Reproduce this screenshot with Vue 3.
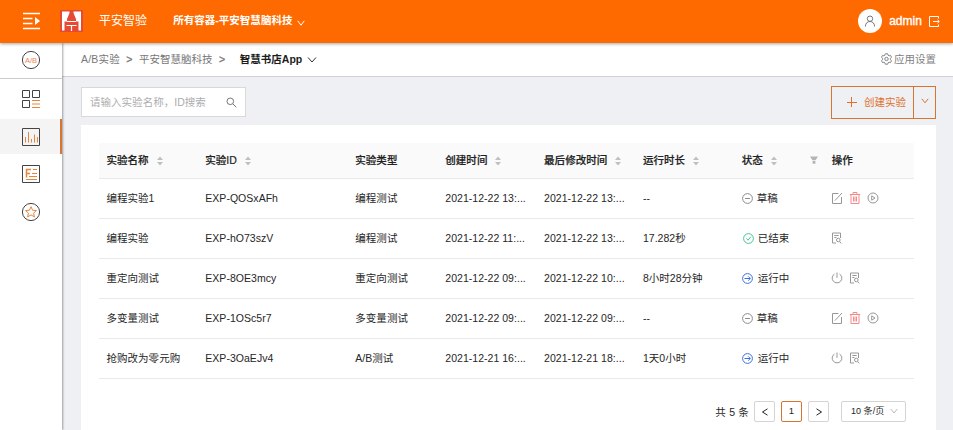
<script setup>
const columns = [
  { title: '实验名称', sort: true },
  { title: '实验ID', sort: true },
  { title: '实验类型' },
  { title: '创建时间', sort: true },
  { title: '最后修改时间', sort: true },
  { title: '运行时长', sort: true },
  { title: '状态', sort: true, filter: true },
  { title: '操作' }
]
const rows = [
  { cells: ['编程实验1', 'EXP-QOSxAFh', '编程测试', '2021-12-22 13:...', '2021-12-22 13:...', '--'], state: 'draft' },
  { cells: ['编程实验', 'EXP-hO73szV', '编程测试', '2021-12-22 11:...', '2021-12-22 13:...', '17.282秒'], state: 'done' },
  { cells: ['重定向测试', 'EXP-8OE3mcy', '重定向测试', '2021-12-22 09:...', '2021-12-22 10:...', '8小时28分钟'], state: 'running' },
  { cells: ['多变量测试', 'EXP-1OSc5r7', '多变量测试', '2021-12-22 09:...', '2021-12-22 09:...', '--'], state: 'draft' },
  { cells: ['抢购改为零元购', 'EXP-3OaEJv4', 'A/B测试', '2021-12-21 16:...', '2021-12-21 18:...', '1天0小时'], state: 'running' }
]
const states = {
  draft: { label: '草稿', actions: ['edit', 'trash', 'play'] },
  done: { label: '已结束', actions: ['report'] },
  running: { label: '运行中', actions: ['power', 'report'] }
}
</script>

<template>
  <div class="page">
    <header class="top">
      <svg class="fold" width="18" height="18" viewBox="0 0 18 18"><path d="M0 1.500h17M0 6.500h9.500M0 11.500h9.500M0 16.500h17" /><path class="fill" d="M12 5l5 4-5 4z" /></svg>
      <svg class="logo" width="23" height="22" viewBox="0 0 23 22">
        <rect width="23" height="22" fill="#e64a35" />
        <path d="M2 1.500H9.500V3L7 9v2.500H4.500V20.500H2zM21 1.500H13.500V3L16 9v2.500h2.500V20.500H21z" fill="#fff" />
        <path d="M7 11.500h9M6.500 15.500h10M11.500 15.500V21" stroke="#fff" stroke-width="1.200" />
      </svg>
      <span class="brand">平安智验</span>
      <span class="scope">所有容器-平安智慧脑科技</span>
      <svg class="scope-arrow" width="8" height="8" viewBox="0 0 8 8"><path d="M.7 1.800L4 6.200l3.300-4.400" /></svg>
      <span class="avatar"><svg width="12" height="12" viewBox="0 0 12 12"><circle cx="6" cy="3.700" r="2.700" /><path d="M1.400 11.500C1.500 8.200 3.400 6.500 6 6.500s4.500 1.700 4.600 5" /></svg></span>
      <span class="user">admin</span>
      <svg class="exit" width="11" height="11" viewBox="0 0 11 11"><path d="M9.500 2.500v-2h-9v10h9v-2M4 5.500h6M8.500 3.800l1.800 1.700-1.800 1.700" /></svg>
    </header>

    <div class="body">
      <nav class="side">
        <div class="nav first">
          <svg width="20" height="20" viewBox="0 0 20 20"><circle cx="10" cy="10" r="8.600" /><text x="10" y="12.800" text-anchor="middle">A/B</text></svg>
        </div>
        <div class="nav">
          <svg width="20" height="20" viewBox="0 0 20 20"><path d="M1.500 1.500h7v7h-7zM11.500 1.500h7v7h-7zM1.500 11.500h7v7h-7z" /><path class="o" d="M11 11.500h8M11 15h8M11 18.500h8" /></svg>
        </div>
        <div class="nav active">
          <svg width="20" height="20" viewBox="0 0 20 20"><path d="M1.500 1.500h17v17h-17z" /><path class="o" d="M4.500 10v5.500M7.500 5v10.500M10.500 12v3.500M13.500 7.500v8M16.500 10v5.500" /></svg>
        </div>
        <div class="nav">
          <svg width="20" height="20" viewBox="0 0 20 20"><path d="M1.500 1.500h17v17h-17z" /><path class="o bold" d="M5.500 5v8.500M5 5.500h5M5 9.500h4" /><path class="o" d="M12 5.500h4M11 9.500h5M8 12.500h8M5 15.500h11" /></svg>
        </div>
        <div class="nav">
          <svg width="20" height="20" viewBox="0 0 20 20"><circle cx="10" cy="10" r="8.600" /><path class="o" d="M10 4.700l1.600 3.500 3.800.4-2.800 2.500.8 3.800-3.400-2-3.400 2 .8-3.800-2.800-2.500 3.800-.4z" /></svg>
        </div>
      </nav>

      <main class="main">
        <div class="crumbs">
          <span class="crumb latin">A/B实验</span><span class="gt">&gt;</span>
          <span class="crumb">平安智慧脑科技</span><span class="gt">&gt;</span>
          <span class="app">智慧书店App</span>
          <svg class="app-arrow" width="10" height="8" viewBox="0 0 10 8"><path d="M1 1.500l4 4.500 4-4.500" /></svg>
          <span class="setting">
            <svg width="11" height="12" viewBox="0 0 11 12"><path d="M4.300.8h2.400l.4 1.400 1 .6 1.400-.4 1 1.900-1 1v1.400l1 1-1 1.900-1.400-.4-1 .6-.4 1.400H4.300l-.4-1.400-1-.6-1.400.4-1-1.900 1-1V5.300l-1-1 1-1.900 1.400.4 1-.6z" /><circle cx="5.500" cy="6" r="1.700" /></svg>
            <span>应用设置</span>
          </span>
        </div>

        <div class="tools">
          <div class="search">
            <span>请输入实验名称，ID搜索</span>
            <svg width="11" height="11" viewBox="0 0 11 11"><circle cx="4.300" cy="4.300" r="3.300" /><path d="M6.800 6.800l3.500 3.500" /></svg>
          </div>
          <div class="create">
            <div class="create-main">
              <svg width="10" height="10" viewBox="0 0 10 10"><path d="M0 5.500h10M4.500 0v10" /></svg>
              <span>创建实验</span>
            </div>
            <div class="create-more"><svg width="8" height="8" viewBox="0 0 8 8"><path d="M.8 1.800L4 5.800l3.200-4" /></svg></div>
          </div>
        </div>

        <section class="card">
          <div class="row head">
            <div v-for="c in columns" :key="c.title" class="cell">
              <span>{{ c.title }}</span>
              <svg v-if="c.sort" class="sort" width="6" height="10" viewBox="0 0 6 10"><path d="M0 4l3-3.500L6 4zM0 6l3 3.500L6 6z" /></svg>
              <svg v-if="c.filter" class="filter" width="8" height="8" viewBox="0 0 8 8"><path d="M0 .5h8L5.500 4.300h-3zM2.600 5h2.800v2.700H2.600z" /></svg>
            </div>
          </div>
          <div v-for="r in rows" :key="r.cells[1]" class="row">
            <div v-for="(t, i) in r.cells" :key="i" class="cell">{{ t }}</div>
            <div class="cell state" :class="r.state">
              <svg width="11" height="11" viewBox="0 0 11 11">
                <circle cx="5.500" cy="5.500" r="4.900" />
                <path v-if="r.state === 'draft'" d="M3 5.500h5" />
                <path v-else-if="r.state === 'done'" d="M3.300 5.400l1.700 1.800 2.900-3.600" />
                <path v-else d="M2.500 5.500h5.800M6.200 3.400l2.100 2.100-2.100 2.100" />
              </svg>
              <span>{{ states[r.state].label }}</span>
            </div>
            <div class="cell actions">
              <svg v-for="a in states[r.state].actions" :key="a" :class="a" width="12" height="12" viewBox="0 0 12 12">
                <path v-if="a === 'edit'" d="M7.500 1.500h-6v10h9V5M4 8.500l7-7.500" />
                <path v-else-if="a === 'trash'" d="M.8 2.500h10.400M4 2.500v-2h4v2M2 2.500v9h8v-9M4.500 4.500v5M6 4.500v5M7.500 4.500v5" />
                <template v-else-if="a === 'play'"><circle cx="6" cy="6" r="5" /><path d="M4.700 3.800L8 6 4.700 8.200z" /></template>
                <path v-else-if="a === 'power'" d="M3.500 2A4.800 4.800 0 1 0 8.500 2M6 .5v5.300" />
                <template v-else><path d="M5 11H1.500V1h8v5M3.300 3.500h4.400M3.300 5.500h2.200M8.700 9.500l1.400 1.900" /><circle cx="7.300" cy="8" r="1.800" /></template>
              </svg>
            </div>
          </div>
          <div class="pager">
            <span class="total">共 5 条</span>
            <span class="pg"><svg width="8" height="8" viewBox="0 0 8 8"><path d="M6.500.8L1.500 4l5 3.200" /></svg></span>
            <span class="pg current">1</span>
            <span class="pg"><svg width="8" height="8" viewBox="0 0 8 8"><path d="M1.500.8l5 3.200-5 3.200" /></svg></span>
            <span class="size"><span>10 条/页</span><svg width="8" height="8" viewBox="0 0 8 8"><path d="M.8 2L4 6l3.200-4" /></svg></span>
          </div>
        </section>
      </main>
    </div>
  </div>
</template>

<style>
body { margin: 0; overflow: hidden; }
</style>

<style scoped>
.page { box-sizing: border-box; height: 430px; width: 953px; display: flex; flex-direction: column; overflow: hidden; background: #eff0f4; color: #262626; font: 10.500px/16px "Liberation Sans", "Noto Sans CJK SC", sans-serif; letter-spacing: .03px; white-space: nowrap; }
.page * { box-sizing: border-box; }
svg { display: block; flex: none; fill: none; stroke: currentColor; stroke-width: 1; }
.top { height: 43px; flex: none; display: flex; align-items: center; background: #ff6a00; color: #fff; padding: 0 13px 1px 23px; box-shadow: 0 1px 3px rgba(0, 0, 0, .35); position: relative; z-index: 2; }
.fold { stroke-width: 1.400; }
.fold .fill { fill: #fff; stroke: none; }
.logo { margin-left: 19px; stroke: none; }
.brand { margin-left: 16px; font-size: 12px; }
.scope { margin-left: 26px; padding-bottom: 2px; font-weight: 700; }
.scope-arrow { margin: 3px 0 0 5px; }
.avatar { margin-left: auto; width: 24px; height: 24px; border-radius: 50%; background: #fff; color: #777; display: flex; align-items: center; justify-content: center; }
.user { margin: 0 7px 0 7px; font-size: 12px; -webkit-text-stroke: .35px #fff; }
.body { flex: 1; display: flex; min-height: 0; }
.side { width: 62px; background: #fff; box-shadow: 1px 0 2px rgba(0, 0, 0, .35); position: relative; z-index: 1; }
.nav { height: 35px; margin-bottom: 2.600px; display: flex; align-items: center; padding: 1px 0 0 21px; color: #444; }
.nav.first { height: 36px; margin-bottom: 2px; padding: 0 0 2px 21px; border-bottom: 1px solid #ccc; }
.nav.active { background: #f4f4f4; border-right: 2px solid #d9742e; }
.nav .o { stroke: #e8853c; }
.nav .bold { stroke-width: 1.500; }
.nav text { font-size: 7.500px; fill: #ee8658; stroke: none; }
.main { flex: 1; min-width: 0; }
.crumbs { height: 34px; background: #fff; border-bottom: 1px solid #d2d2d4; padding: 0 17px 1px 19px; display: flex; align-items: center; color: #777; }
.gt { width: 19px; text-align: center; }
.crumb + .gt { -webkit-text-stroke: .3px #777; }
.crumb.latin { letter-spacing: .2px; }
.app { margin-left: 8px; color: #1c1c1c; font-weight: 700; }
.app-arrow { margin: 1px 0 0 5px; color: #333; }
.setting { margin-left: auto; display: flex; align-items: center; gap: 2px; color: #828282; }
.tools { display: flex; justify-content: space-between; padding: 9px 17px 0 19px; height: 48px; }
.search { width: 165px; height: 30px; margin-top: 1px; background: #fff; border: 1px solid #d9d9d9; display: flex; align-items: center; justify-content: space-between; padding: 0 8px; color: #adadad; }
.search svg { color: #777; }
.create { display: flex; width: 105px; height: 33px; border: 1px solid #d9742e; color: #e0702c; }
.create-main { flex: 1; display: flex; align-items: center; gap: 7px; padding: 0 0 1px 15px; }
.create-more { width: 22px; border-left: 1px solid #d9742e; display: flex; align-items: center; justify-content: center; padding-bottom: 4px; }
.card { margin: 0 17px 0 19px; background: #fff; height: 305px; padding: 18px 22px 0 18px; }
.row { display: grid; grid-template-columns: 98.800px 150px 90px 98.800px 98.800px 98.800px 90px 1fr; height: 40px; border-bottom: 1px solid #e9e9e9; }
.row.head { height: 36px; background: #fafafa; font-weight: 500; color: #222; }
.head .cell { -webkit-text-stroke: .2px #222; }
.cell { display: flex; align-items: center; padding: 0 7.500px 2px; }
.sort { margin: 3px 0 0 8px; fill: #bfbfbf; stroke: none; }
.filter { margin-left: auto; margin-right: -1px; fill: #b5b5b5; stroke: none; }
.state svg { margin: 1px 4px 0 0; color: #8c8c8c; }
.state.done svg { color: #45c597; margin: 1px 4px 0 1px; }
.state.running svg { color: #3b72e0; margin-right: 5px; }
.actions { gap: 6px; color: #989898; padding-left: 7px; }
.actions .trash { color: #f48a8a; }
.pager { display: flex; align-items: center; justify-content: flex-end; height: 21px; margin-top: 22px; padding-right: 8px; }
.total { margin-right: 5px; letter-spacing: .2px; }
.pg { width: 21px; height: 21px; margin-right: 6px; border: 1px solid #d4d4d4; border-radius: 2px; display: flex; align-items: center; justify-content: center; }
.pg.current { border: 1px solid #d9742e; padding-bottom: 1px; font-size: 9.500px; }
.size { width: 65px; height: 21px; margin-left: 6px; border: 1px solid #d4d4d4; border-radius: 2px; display: flex; align-items: center; justify-content: space-between; padding: 0 7px 1px 9px; font-size: 9px; }
.size svg { color: #bbb; }
</style>
